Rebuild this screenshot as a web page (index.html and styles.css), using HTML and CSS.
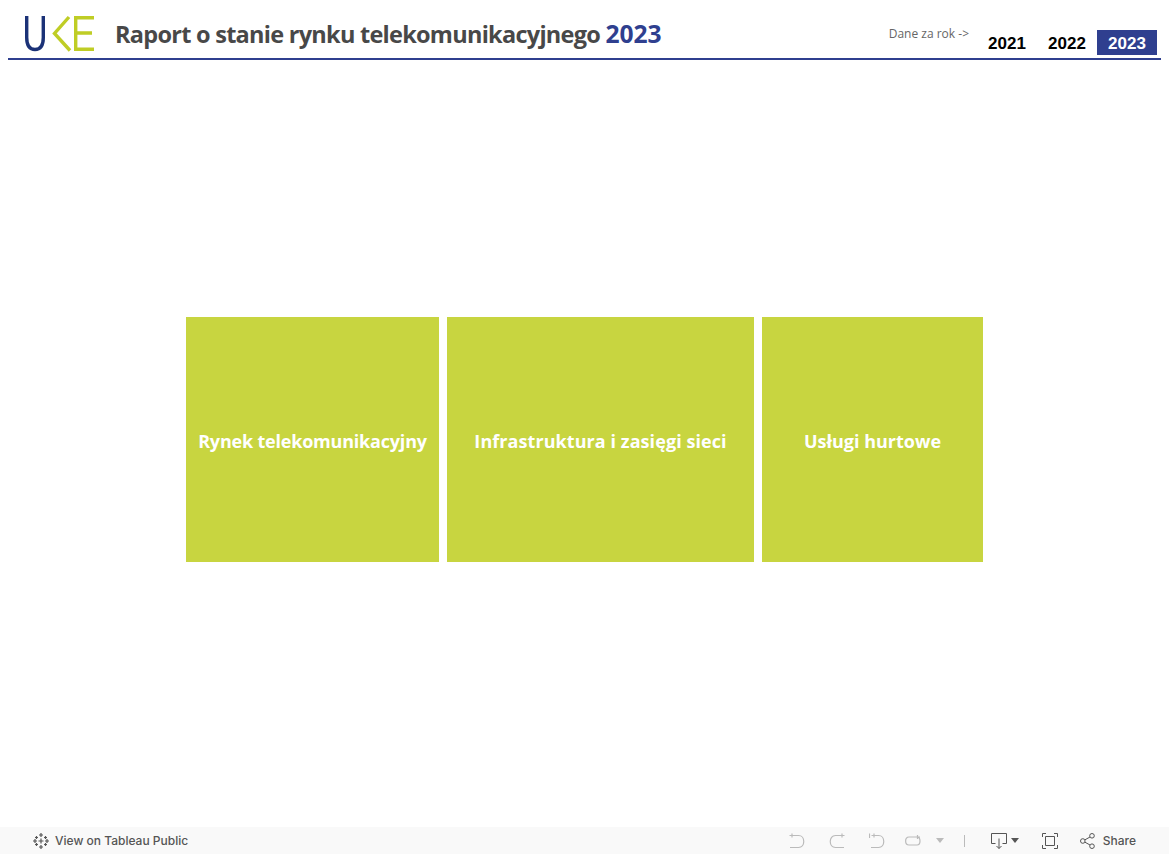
FILE: index.html
```html
<!DOCTYPE html>
<html lang="en">
<head>
    <meta charset="UTF-8">
    <meta name="viewport" content="width=device-width, initial-scale=1.0">
    <title>Raport o stanie rynku telekomunikacyjnego 2023</title>
    <link rel="stylesheet" href="styles.css">
</head>
<body>
    <header class="header">
        <svg class="logo" width="72" height="38" viewBox="0 0 72 38" role="img" aria-label="UKE">
            <path d="M2.700 1v21.500c0 8 3.300 12 8.300 12s8.300-4 8.300-12V1" fill="none" stroke="#1b3277" stroke-width="3.400"/>
            <path d="M45 2L30.500 18.500L46 35.500" fill="none" stroke="#bfcd25" stroke-width="3.400"/>
            <path d="M70 2.700H51.700V34.300H70M51.700 18H68" fill="none" stroke="#bfcd25" stroke-width="3.400"/>
        </svg>
        <h1 class="title">Raport o stanie rynku telekomunikacyjnego <span class="title-year">2023</span></h1>
        <div class="years">
            <span class="years-label">Dane za rok -&gt;</span>
            <a class="year">2021</a>
            <a class="year">2022</a>
            <a class="year year-active">2023</a>
        </div>
    </header>

    <main class="main">
        <div class="tiles">
            <a class="tile tile-market">Rynek telekomunikacyjny</a>
            <a class="tile tile-infra">Infrastruktura i zasięgi sieci</a>
            <a class="tile tile-wholesale">Usługi hurtowe</a>
        </div>
    </main>

    <footer class="toolbar">
        <a class="tool tool-public">
            <svg width="18" height="18" viewBox="0 0 18 18" fill="none" stroke="#555" stroke-width="1.200">
                <path d="M9 1v4M7 3h4M9 13v4M7 15h4M1 9h4M3 7v4M13 9h4M15 7v4M9 6.500v5M6.500 9h5M4.500 4v3M3 5.500h3M13.500 4v3M12 5.500h3M4.500 11v3M3 12.500h3M13.500 11v3M12 12.500h3"/>
            </svg>
            View on Tableau Public
        </a>
        <div class="tool-group">
            <svg class="tool-undo" width="16" height="16" viewBox="0 0 16 16" fill="none" stroke="#bbb" stroke-width="1.200">
                <path d="M0.500 2.500H9.500c7 0 7 12 0 12H1M3 0.500V4.500"/>
            </svg>
            <svg class="tool-redo" width="16" height="16" viewBox="0 0 16 16" fill="none" stroke="#bbb" stroke-width="1.200">
                <path d="M15.500 2.500H6.500c-7 0-7 12 0 12H15M13 0.500V4.500"/>
            </svg>
            <svg class="tool-revert" width="16" height="16" viewBox="0 0 16 16" fill="none" stroke="#bbb" stroke-width="1.200">
                <path d="M0.500 0.500V5M2.500 2.500H9.500c7 0 7 12 0 12H2M5 0.500V4.500"/>
            </svg>
            <svg class="tool-refresh" width="16" height="16" viewBox="0 0 16 16" fill="none" stroke="#bbb" stroke-width="1.200">
                <path d="M15 4H4c-4.500 0-4.500 8 0 8h8c4 0 4-8 0-8M12.500 2V6"/>
            </svg>
            <span class="caret caret-off"></span>
            <span class="divider"></span>
            <span class="tool-download">
                <svg width="16" height="16" viewBox="0 0 16 16" fill="none" stroke="#555" stroke-width="1">
                    <path d="M4.500 10.500H0.500V0.500H15.500V10.500H11.500M8 5.500V15.500M5.500 13L8 15.500L10.500 13"/>
                </svg>
                <span class="caret"></span>
            </span>
            <svg class="tool-full" width="16" height="16" viewBox="0 0 16 16" fill="none" stroke="#555" stroke-width="1">
                <path d="M0.500 4V0.500H4M12 0.500H15.500V4M15.500 12V15.500H12M4 15.500H0.500V12M3.500 3.500H12.500V12.500H3.500Z"/>
            </svg>
            <a class="tool tool-share">
                <svg width="15" height="16" viewBox="0 0 15 16" fill="none" stroke="#555" stroke-width="1">
                    <circle cx="2.800" cy="8" r="2.300"/><circle cx="12" cy="2.800" r="2.300"/><circle cx="12" cy="13.200" r="2.300"/>
                    <path d="M4.800 6.900L10 4M4.800 9.100L10 12"/>
                </svg>
                Share
            </a>
        </div>
    </footer>
</body>
</html>
```

FILE: styles.css
```css
* {
    box-sizing: border-box;
}
body {
    font-family: "Open Sans", Arial, sans-serif;
    margin: 0;
    height: 100vh;
    display: flex;
    flex-direction: column;
    background-color: #fff;
    overflow: hidden;
}
.header {
    height: 60px;
    margin: 0 8px;
    padding: 15px 4px 0 16px;
    display: flex;
    align-items: flex-start;
    border-bottom: 2px solid #2f3f8f;
}
.logo {
    display: block;
    flex: none;
}
.title {
    margin: 3px 0 0 19px;
    font-size: 23.5px;
    line-height: 32px;
    font-weight: 700;
    color: #484848;
    letter-spacing: -0.73px;
    white-space: nowrap;
}
.title-year {
    color: #2f3f8f;
    font-size: 24.6px;
    letter-spacing: 0;
}
.years {
    margin-left: auto;
    display: flex;
    align-items: flex-start;
}
.years-label {
    margin: 11px 8px 0 0;
    font-size: 12px;
    line-height: 16px;
    color: #666;
}
.year {
    width: 60px;
    height: 25px;
    margin-top: 15px;
    font-family: "Liberation Sans", Arial, sans-serif;
    font-size: 17px;
    font-weight: 700;
    line-height: 27px;
    text-align: center;
    color: #000;
}
.year-active {
    background-color: #2f3f8f;
    color: #fff;
}
.main {
    flex: 1;
    display: flex;
    justify-content: center;
    align-items: center;
    padding-bottom: 8px;
}
.tiles {
    display: flex;
    gap: 8px;
}
.tile {
    height: 245px;
    display: flex;
    align-items: center;
    justify-content: center;
    padding-top: 2px;
    background-color: #c8d540;
    color: #fff;
    font-size: 18px;
    font-weight: 700;
    white-space: nowrap;
}
.tile-market {
    width: 253px;
    letter-spacing: -0.2px;
}
.tile-infra {
    width: 307px;
    letter-spacing: 0.07px;
}
.tile-wholesale {
    width: 221px;
}
.toolbar {
    height: 27px;
    display: flex;
    align-items: center;
    justify-content: space-between;
    padding: 0 33px 0 32px;
    background-color: #f9f9f9;
    color: #555;
    font-family: Inter, Arial, sans-serif;
    font-size: 12px;
    font-weight: 500;
}
.tool {
    display: flex;
    align-items: center;
    gap: 5px;
}
.tool-group {
    display: flex;
    align-items: center;
}
.tool-group svg {
    display: block;
}
.tool-redo {
    margin-left: 24px;
}
.tool-revert {
    margin-left: 24px;
}
.tool-refresh {
    margin-left: 20px;
}
.caret {
    width: 0;
    height: 0;
    border-left: 4px solid transparent;
    border-right: 4px solid transparent;
    border-top: 5px solid #555;
}
.caret-off {
    margin-left: 15px;
    border-top-color: #bbb;
}
.divider {
    width: 1px;
    height: 12px;
    margin: 0 26px 0 20px;
    background-color: #bbb;
}
.tool-download {
    display: flex;
    align-items: center;
    gap: 4px;
}
.tool-full {
    margin-left: 23px;
}
.tool-share {
    margin-left: 22px;
    gap: 8px;
}
```
